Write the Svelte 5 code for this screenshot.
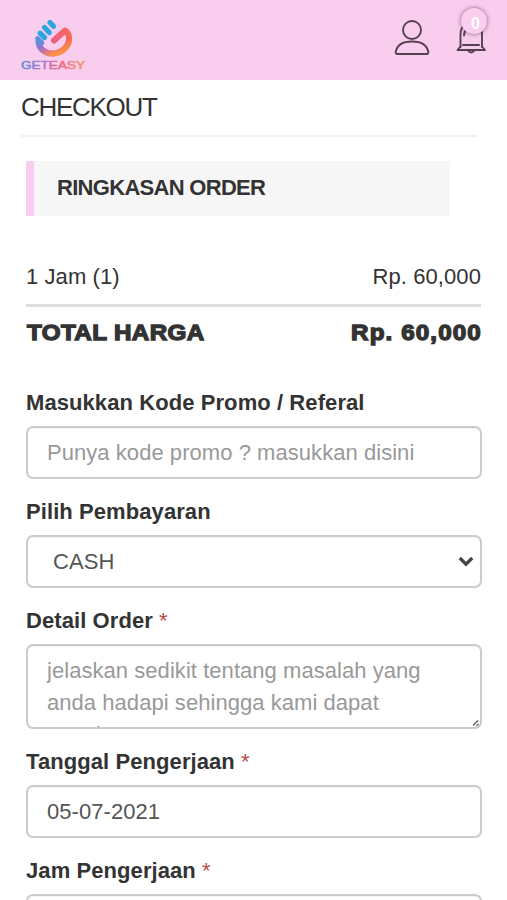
<script lang="ts">
	let items = [{ name: '1 Jam', qty: 1, price: 60000 }];
	let notifications = 0;
	let promo = '';
	let payment = 'CASH';
	let detail = '';
	let date = '05-07-2021';
	let time = '';

	$: total = items.reduce((sum, item) => sum + item.price * item.qty, 0);

	function rupiah(value: number) {
		return 'Rp. ' + value.toLocaleString('en-US');
	}
</script>

<header>
	<a class="logo" href="#home" aria-label="Home">
		<svg width="66" height="54" viewBox="0 0 66 54">
			<defs>
				<linearGradient id="hand" gradientUnits="userSpaceOnUse" x1="15" y1="22" x2="50" y2="26">
					<stop offset="0" stop-color="#5d8fdc" />
					<stop offset="0.25" stop-color="#b766c0" />
					<stop offset="0.55" stop-color="#f0607c" />
					<stop offset="1" stop-color="#f76a4e" />
				</linearGradient>
				<linearGradient id="glow" gradientUnits="userSpaceOnUse" x1="28" y1="22" x2="34" y2="38">
					<stop offset="0.3" stop-color="#ffa23c" stop-opacity="0" />
					<stop offset="1" stop-color="#ffa23c" stop-opacity="0.85" />
				</linearGradient>
				<linearGradient id="brand" x1="0" y1="0" x2="1" y2="0">
					<stop offset="0" stop-color="#5b8fd6" />
					<stop offset="0.35" stop-color="#a77ac8" />
					<stop offset="0.65" stop-color="#f06a80" />
					<stop offset="1" stop-color="#f79a62" />
				</linearGradient>
			</defs>
			<g fill="none" stroke-linecap="round" stroke-linejoin="round">
				<path d="M17.500 23c0 7.500 6 12.500 14 12.500 10 0 17.500-8 16.500-16.500-.3-3-1.800-5-4-6.500L33 22.500" stroke="url(#hand)" stroke-width="6" />
				<path d="M17.500 23c0 7.500 6 12.500 14 12.500 10 0 17.500-8 16.500-16.500" stroke="url(#glow)" stroke-width="6" />
				<path d="M16.500 20.500l4.500 4.500" stroke="#5d8fdc" stroke-width="4.600" />
				<path d="M19 15.200l4.500 4.300M23.500 9.500l4.800 5M29 4.500l3.500 3.800" stroke="#2ba6e0" stroke-width="5.200" />
			</g>
			<text x="0" y="51" textLength="64" lengthAdjust="spacingAndGlyphs" fill="url(#brand)">GETEASY</text>
		</svg>
	</a>
	<nav>
		<a href="#profile" aria-label="Profile">
			<svg width="36" height="38" viewBox="0 0 36 38">
				<circle cx="18" cy="11" r="9" />
				<path d="M3.300 35c-1.200 0-1.800-.8-1.600-2C3 26 9.500 22.500 18 22.500S33 26 34.300 33c.2 1.200-.4 2-1.600 2z" />
			</svg>
		</a>
		<a class="bell" href="#notifications" aria-label="Notifications">
			<svg width="30" height="38" viewBox="0 0 30 38">
				<path d="M4.500 29V16C4.500 9 9 5.500 15 5.500S26 9 26 16v13M7 27h16M8 17.500c0-3 1-5 3-6.500" />
				<path d="M4.500 28.500L1.500 32h27.500l-3-3.500M12 32.500q3.200 4 6.500 0" />
			</svg>
			<span class="badge">{notifications}</span>
		</a>
	</nav>
</header>

<main>
	<h1>CHECKOUT</h1>
	<h2>RINGKASAN ORDER</h2>

	<section class="summary">
		{#each items as item}
			<div class="row">
				<span>{item.name} ({item.qty})</span>
				<span>{rupiah(item.price)}</span>
			</div>
		{/each}
		<div class="row total">
			<span>TOTAL HARGA</span>
			<span class="amount">{rupiah(total)}</span>
		</div>
	</section>

	<form>
		<div class="group">
			<label for="promo">Masukkan Kode Promo / Referal</label>
			<input id="promo" placeholder="Punya kode promo ? masukkan disini" bind:value={promo} />
		</div>
		<div class="group">
			<label for="payment">Pilih Pembayaran</label>
			<div class="field">
				<select id="payment" bind:value={payment}>
					<option>CASH</option>
				</select>
				<svg class="chevron" width="16" height="11" viewBox="0 0 16 11">
					<path d="M1.800 2l6.200 6.200L14.200 2" />
				</svg>
			</div>
		</div>
		<div class="group">
			<label for="detail">Detail Order <span>*</span></label>
			<div class="field">
				<textarea
					id="detail"
					placeholder="jelaskan sedikit tentang masalah yang anda hadapi sehingga kami dapat membantu"
					bind:value={detail}
				></textarea>
				<svg class="grip" width="8" height="8" viewBox="0 0 8 8">
					<path d="M1 6.500L6 1.500M4.500 6.800L6.500 4.800" />
				</svg>
			</div>
		</div>
		<div class="group">
			<label for="date">Tanggal Pengerjaan <span>*</span></label>
			<input id="date" bind:value={date} />
		</div>
		<div class="group">
			<label for="time">Jam Pengerjaan <span>*</span></label>
			<input id="time" bind:value={time} />
		</div>
	</form>
</main>

<style>
	:global(body) {
		background: #fff;
		color: #333;
		font-family: "Liberation Sans", Arial, sans-serif;
		font-size: 22px;
		line-height: 31px;
	}

	:global(#app) {
		height: 900px;
		overflow: hidden;
	}

	header {
		display: flex;
		justify-content: space-between;
		height: 80px;
		box-sizing: border-box;
		padding: 18px 21px 0;
		background: #f9cdee;
	}

	svg {
		display: block;
		overflow: visible;
	}

	.logo text {
		font: 11.5px "Liberation Sans", Arial, sans-serif;
		stroke: url(#brand);
		stroke-width: 0.5px;
	}

	nav {
		display: flex;
		gap: 26px;
		padding-top: 1px;
	}

	nav svg {
		fill: none;
		stroke: #56404f;
		stroke-width: 1.9;
		stroke-linecap: round;
		stroke-linejoin: round;
	}

	.bell {
		position: relative;
		margin-top: -1px;
		text-decoration: none;
	}

	.badge {
		position: absolute;
		top: -10px;
		left: 5px;
		width: 26px;
		height: 26px;
		border-radius: 50%;
		background: #f9cdee;
		box-shadow: 0 0 4px rgba(70, 30, 60, 0.65);
		color: #fff;
		font-size: 16px;
		font-weight: bold;
		line-height: 31px;
		text-align: center;
		text-indent: 3px;
	}

	h1 {
		margin: 0 30px 0 21px;
		padding: 12px 0;
		border-bottom: 2px solid #f1f1f1;
		font-size: 26px;
		font-weight: normal;
		letter-spacing: -1.3px;
	}

	h2 {
		margin: 24px 57px 45px 26px;
		padding: 12px 22px 13px 23px;
		border-left: 8px solid #f9cdee;
		background: #f6f6f6;
		font-size: 22px;
		line-height: 30px;
		letter-spacing: -0.7px;
	}

	.summary {
		margin: 0 26px;
	}

	.row {
		display: flex;
		justify-content: space-between;
		padding-bottom: 12px;
		letter-spacing: 0.08px;
	}

	.total {
		padding: 10px 0 0 1px;
		border-top: 3px solid #ddd;
		font-weight: bold;
		letter-spacing: 0.35px;
		-webkit-text-stroke: 1.3px #333;
	}

	.total span {
		transform: scaleX(1.1);
		transform-origin: left;
	}

	.total .amount {
		margin-right: -1px;
		letter-spacing: 1px;
		transform-origin: right;
	}

	form {
		margin: 39px 25px 0 26px;
	}

	.group {
		margin-bottom: 17px;
	}

	label {
		display: block;
		margin-bottom: 8px;
		font-weight: bold;
		letter-spacing: 0.08px;
	}

	label span {
		color: #b94a48;
		font-weight: normal;
	}

	input,
	select,
	textarea {
		display: block;
		width: 100%;
		height: 53px;
		box-sizing: border-box;
		margin: 0;
		padding: 9px 19px;
		border: 2px solid #ccc;
		border-radius: 7px;
		outline: none;
		background: #fff;
		box-shadow: inset 0 1px 1px rgba(0, 0, 0, 0.05);
		color: #555;
		font: inherit;
		letter-spacing: 0.05px;
	}

	select {
		padding-left: 25px;
		appearance: none;
	}

	textarea {
		height: 85px;
		line-height: 32px;
		overflow: hidden;
		resize: none;
	}

	::placeholder {
		color: #999;
		opacity: 1;
	}

	.field {
		position: relative;
	}

	.chevron {
		position: absolute;
		top: 21px;
		right: 8px;
		fill: none;
		stroke: #444;
		stroke-width: 3.2;
	}

	.grip {
		position: absolute;
		right: 2px;
		bottom: 2px;
		stroke: #555;
		stroke-width: 1.2;
	}
</style>
